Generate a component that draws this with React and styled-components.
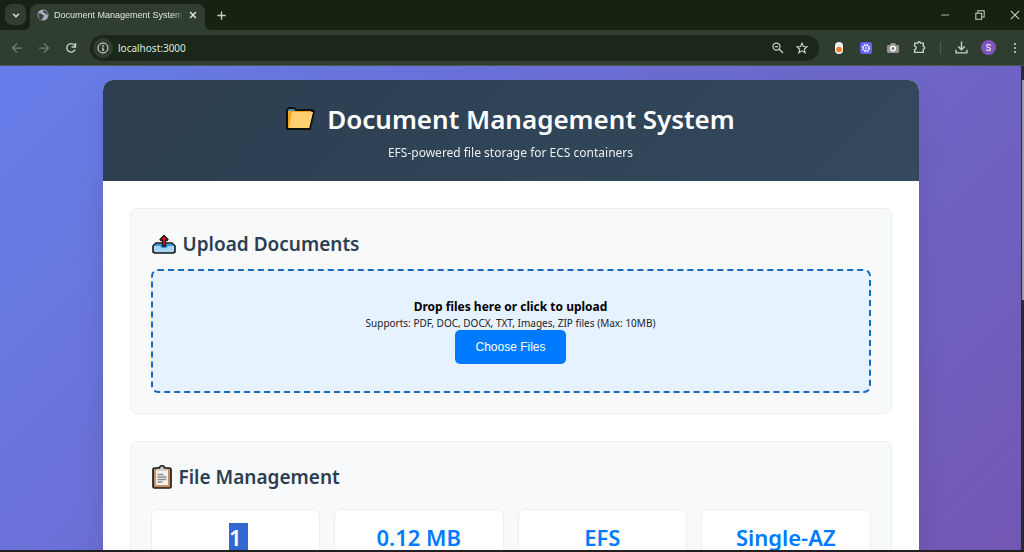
import React from 'react'
import styled, { createGlobalStyle } from 'styled-components'

const GlobalStyle=createGlobalStyle`
    * {
        box-sizing: border-box;
    }
    body {
        margin: 0;
        font-family: "Segoe UI", "Noto Sans", "Open Sans", sans-serif;
        color: #000;
    }
    h1, h2, p {
        margin: 0;
    }
    button {
        border: none;
        padding: 0;
        background: none;
        color: inherit;
        font: inherit;
        cursor: pointer;
    }
    svg {
        display: block;
    }
`

const BrowserWindow=styled.div`
    display: flex;
    flex-direction: column;
    height: 100vh;
    overflow: hidden;
    background-color: #2f3e2e;
`
const TabStrip=styled.div`
    display: flex;
    flex: none;
    height: 30px;
    padding-left: 5px;
    background-color: #162313;
`
const TabSearch=styled.button`
    display: flex;
    align-items: center;
    justify-content: center;
    width: 21px;
    height: 21px;
    margin-top: 4px;
    border-radius: 7px;
    background-color: #2f3e2e;
    color: #dfe8da;
`
const Tab=styled.div`
    position: relative;
    display: flex;
    align-items: center;
    width: 175px;
    margin: 4px 0 0 4px;
    padding: 0 6px 4px 7px;
    border-radius: 8px 8px 0 0;
    background-color: #2f3e2e;
    color: #dfe8da;
    &::before, &::after {
        content: "";
        position: absolute;
        bottom: 0;
        width: 6px;
        height: 6px;
    }
    &::before {
        right: 100%;
        background: radial-gradient(circle at 0 0, transparent 6px, #2f3e2e 6px);
    }
    &::after {
        left: 100%;
        background: radial-gradient(circle at 100% 0, transparent 6px, #2f3e2e 6px);
    }
`
const TabTitle=styled.span`
    flex: 1;
    min-width: 0;
    margin: 0 3px 0 5px;
    white-space: nowrap;
    font-family: "Liberation Sans", Arial, sans-serif;
    font-size: 9px;
    mask-image: linear-gradient(to right, #000 92%, transparent);
`
const IconButton=styled.button`
    display: flex;
    flex: none;
    align-items: center;
    justify-content: center;
    width: ${props => props.$width || 27}px;
    height: ${props => props.$height || 26}px;
    color: ${props => props.$color || '#c5d2bf'};
`
const WindowControls=styled.div`
    display: flex;
    align-items: center;
    gap: 16px;
    margin-left: auto;
`
const Toolbar=styled.div`
    display: flex;
    flex: none;
    align-items: center;
    height: 36px;
    padding-left: 3px;
    border-bottom: 1px solid #4b584a;
`
const AddressBar=styled.label`
    display: flex;
    flex: 1;
    align-items: center;
    height: 26px;
    margin: 0 10px 0 6px;
    padding: 0 5px 0 3px;
    border-radius: 13px;
    background-color: #1b2819;
`
const SiteInfo=styled.span`
    display: flex;
    align-items: center;
    justify-content: center;
    width: 20px;
    height: 20px;
    border-radius: 50%;
    background-color: #2f3e2e;
    color: #dfe8da;
`
const AddressInput=styled.input`
    flex: 1;
    min-width: 0;
    padding: 0 0 0 5px;
    border: none;
    outline: none;
    background: none;
    color: #dfe8da;
    font-family: "Noto Sans", sans-serif;
    font-size: 10px;
`
const ToolbarActions=styled.div`
    display: flex;
    align-items: center;
    gap: 8px;
`
const Divider=styled.span`
    width: 1px;
    height: 12px;
    margin: 0 3px;
    background-color: #4f634b;
`
const Avatar=styled.span`
    display: flex;
    align-items: center;
    justify-content: center;
    width: 15px;
    height: 15px;
    border-radius: 50%;
    background-color: #8055bd;
    color: #fff;
    font-family: Roboto, sans-serif;
    font-size: 9px;
`
const Viewport=styled.div`
    display: flex;
    flex: 1;
    min-height: 0;
    border-bottom: 2px solid #211f22;
`
const Page=styled.div`
    flex: 1;
    overflow: hidden;
    padding: 14px;
    background: linear-gradient(135deg, #667eea 0%, #764ba2 130%);
`
const ScrollTrack=styled.div`
    width: 3px;
    padding: 14px 0 0 1px;
    background-color: #2b2b2b;
`
const ScrollThumb=styled.div`
    height: 220px;
    background-color: #9f9f9f;
`
const Container=styled.main`
    max-width: 816px;
    margin: 0 auto;
    overflow: hidden;
    border-radius: 10px;
    background-color: #fff;
    box-shadow: 0 14px 28px rgba(0,0,0,0.1);
`
const Header=styled.header`
    padding: 19px 20px;
    background: linear-gradient(135deg, #2c3e50 0%, #34495e 100%);
    color: #fff;
    text-align: center;
`
const Title=styled.h1`
    display: flex;
    align-items: center;
    justify-content: center;
    gap: 12px;
    font-size: 26px;
    line-height: 40px;
    font-weight: 600;
`
const Subtitle=styled.p`
    margin-top: 5px;
    font-size: 12px;
    line-height: 18px;
    opacity: 0.9;
`
const Content=styled.div`
    display: flex;
    flex-direction: column;
    gap: 27px;
    padding: 27px;
`
const Section=styled.section`
    padding: 20px;
    border: 1px solid #eceff2;
    border-radius: 7px;
    background-color: #f8f9fa;
`
const SectionTitle=styled.h2`
    display: flex;
    align-items: center;
    gap: 7px;
    margin-bottom: ${props => props.$space}px;
    padding-left: 1px;
    color: #2c3e50;
    font-size: 19px;
    line-height: 30px;
    font-weight: 600;
`
const DropZone=styled.div`
    padding: 27px;
    border: 2px dashed #1a68bf;
    border-radius: 7px;
    background-color: #e6f2ff;
    text-align: center;
`
const DropTitle=styled.p`
    font-size: 12px;
    line-height: 18px;
    font-weight: 700;
`
const DropHint=styled.p`
    color: #222;
    font-size: 10px;
    line-height: 14px;
`
const ChooseButton=styled.button`
    padding: 10px 20px;
    border-radius: 5px;
    background-color: #007bff;
    color: #fff;
    font-family: "Liberation Sans", Arial, sans-serif;
    font-size: 12px;
    line-height: 14px;
`
const Stats=styled.div`
    display: grid;
    grid-template-columns: repeat(4, 1fr);
    gap: 14px;
`
const StatCard=styled.div`
    padding: 13px;
    border: 1px solid #eceff2;
    border-radius: 7px;
    background-color: #fff;
    text-align: center;
`
const StatValue=styled.div`
    color: #007bff;
    font-size: 22px;
    line-height: 28px;
    font-weight: 600;
`
const Selected=styled.span`
    display: inline-block;
    margin-right: -6px;
    padding-right: 6px;
    background-color: #3367d1;
    color: #fff;
`

const Icon=({ size=12, box=24, width=2, children }) => (
  <svg width={size} height={size} viewBox={`0 0 ${box} ${box}`} fill="none" stroke="currentColor" strokeWidth={width} aria-hidden="true">
    {children}
  </svg>
)

const GlobeIcon=() => (
  <svg width="12" height="12" viewBox="0 0 24 24" aria-hidden="true">
    <circle cx="12" cy="12" r="11" fill="#a9adc0" />
    <path d="M3 9c3-1 5 0 7 2s4 1 4 3-3 2-3 4 0 3-2 4C5 21 2 16 3 9zM13 3c-2 1-1 3 0 4s3 0 4 2 3 2 5 2c-1-5-4-8-9-8z" fill="#39453b" />
  </svg>
)

const FolderIcon=() => (
  <svg width="29" height="24" viewBox="0 0 29 24" aria-hidden="true">
    <path d="M1 3l2-2h5l2 2h16v1h2l-4 18H1z" fill="#f5a623" stroke="#101010" strokeWidth="2" strokeLinejoin="round" />
    <path d="M3 2h5l1 2H2z" fill="#3c8ecb" />
    <path d="M6 5h21l-4 16H3z" fill="#ffd070" />
  </svg>
)

const OutboxIcon=() => (
  <svg width="24" height="20" viewBox="0 0 24 20" aria-hidden="true">
    <path d="M1 12l3-3h16l3 3v6l-2 1H3l-2-1z" fill="#a9d5f5" stroke="#151515" strokeWidth="1.6" strokeLinejoin="round" />
    <path d="M4 10h16l2 2h-6c-1 3-7 3-8 0H2z" fill="#3b96e8" />
    <path d="M12 1.500l4 4-1 1-1.500-.5v6h-3V6L9 6.500l-1-1z" fill="#e81224" stroke="#151515" strokeWidth="1.300" strokeLinejoin="round" />
  </svg>
)

const ClipboardIcon=() => (
  <svg width="20" height="24" viewBox="0 0 20 24" aria-hidden="true">
    <rect x="1" y="3" width="18" height="20" rx="1.500" fill="#c49066" stroke="#1d1d1d" strokeWidth="1.700" />
    <path d="M4 5h12v15H4z" fill="#f1f1f1" />
    <path d="M5.500 3h2c0-3 5-3 5 0h2v3h-9z" fill="#cfcfcf" />
    <path d="M5.500 3h2c0-3 5-3 5 0h2" fill="none" stroke="#1d1d1d" strokeWidth="1.400" />
    <path d="M5.500 9.500h6M5.500 12h9M5.500 14.500h9M5.500 17h5" stroke="#8d8d8d" strokeWidth="1.300" />
  </svg>
)

const stats=[
  { value: '1', selected: true },
  { value: '0.12 MB' },
  { value: 'EFS' },
  { value: 'Single-AZ' },
]

const BrowserTabs=() => (
  <TabStrip>
    <TabSearch aria-label="Search tabs">
      <Icon size={10} width={3.5}><path d="M5 9l7 7 7-7" /></Icon>
    </TabSearch>
    <Tab>
      <GlobeIcon />
      <TabTitle>Document Management System</TabTitle>
      <IconButton $width={12} $height={12} $color="#dfe8da" aria-label="Close tab">
        <Icon size={10} width={3.5}><path d="M5 5l14 14M19 5L5 19" /></Icon>
      </IconButton>
    </Tab>
    <IconButton $width={32} $height={30} aria-label="New tab">
      <Icon size={11} width={3}><path d="M12 3v18M3 12h18" /></Icon>
    </IconButton>
    <WindowControls>
      <IconButton $width={19} $height={30} aria-label="Minimize">
        <Icon size={10}><path d="M3 12h19" /></Icon>
      </IconButton>
      <IconButton $width={19} $height={30} aria-label="Restore">
        <Icon size={10} width={2.5}><path d="M2 8h14v14H2zM7 7V2h15v15h-5" /></Icon>
      </IconButton>
      <IconButton $width={19} $height={30} aria-label="Close">
        <Icon size={10} width={2.5}><path d="M2 2l20 20M22 2L2 22" /></Icon>
      </IconButton>
    </WindowControls>
  </TabStrip>
)

const BrowserToolbar=() => (
  <Toolbar>
    <IconButton $color="#70806c" aria-label="Back">
      <Icon width={2.5}><path d="M22 12H4M12 3l-9 9 9 9" /></Icon>
    </IconButton>
    <IconButton $color="#70806c" aria-label="Forward">
      <Icon width={2.5}><path d="M2 12h18M12 3l9 9-9 9" /></Icon>
    </IconButton>
    <IconButton aria-label="Reload">
      <Icon width={2.8}><path d="M20 15a8.500 8.500 0 1 1-1.500-9L21 9M21 2v8h-8" /></Icon>
    </IconButton>
    <AddressBar>
      <SiteInfo>
        <Icon size={12}><circle cx="12" cy="12" r="10" /><path d="M12 11v7M12 6v3" strokeWidth="2.500" /></Icon>
      </SiteInfo>
      <AddressInput type="text" defaultValue="localhost:3000" aria-label="Address" />
      <IconButton $width={24} aria-label="Zoom">
        <Icon width={2.5}><circle cx="9" cy="9" r="7" /><path d="M14 14l8 8M6 9h6" /></Icon>
      </IconButton>
      <IconButton $width={24} aria-label="Bookmark">
        <Icon width={2.3}><path d="M12 2.500l2.900 6.500 7.100.7-5.300 4.700 1.600 7L12 17.600 5.700 21.400l1.600-7L2 9.700l7.100-.7z" /></Icon>
      </IconButton>
    </AddressBar>
    <ToolbarActions>
      <IconButton $width={19} aria-label="Capsule extension">
        <svg width="8" height="12" viewBox="0 0 8 12">
          <rect width="8" height="12" rx="4" fill="#f0f0f0" />
          <circle cx="4" cy="7.500" r="2.800" fill="#f47a2c" />
        </svg>
      </IconButton>
      <IconButton $width={19} aria-label="Gear extension">
        <svg width="12" height="12" viewBox="0 0 12 12">
          <rect width="12" height="12" rx="2.500" fill="#655cf5" />
          <circle cx="6" cy="6" r="3.700" fill="none" stroke="#e4e4ff" strokeWidth="1.300" strokeDasharray="1.800 1.100" />
          <circle cx="6" cy="6" r="2.700" fill="none" stroke="#e4e4ff" />
          <circle cx="6" cy="6" r="1" fill="#e4e4ff" />
        </svg>
      </IconButton>
      <IconButton $width={19} aria-label="Camera extension">
        <svg width="12" height="11" viewBox="0 0 12 11">
          <path d="M1 3h2l1-2h4l1 2h2l1 1v6l-1 1H1l-1-1V4z" fill="#969696" />
          <circle cx="6" cy="6.500" r="2.300" fill="#777" stroke="#fff" strokeWidth="1.500" />
        </svg>
      </IconButton>
      <IconButton $width={19} aria-label="Extensions">
        <Icon size={13} width={2.6}><path d="M3 4h6a2.500 2.500 0 0 1 5 0h5v6a2.500 2.500 0 0 1 0 5v6H3v-5c4-1 4-6 0-7z" /></Icon>
      </IconButton>
      <Divider />
      <IconButton $width={19} aria-label="Downloads">
        <Icon size={13} width={2.6}><path d="M12 1v14M6 10l6 6 6-6M2 16v6h20v-6" /></Icon>
      </IconButton>
      <IconButton $width={19} aria-label="Profile"><Avatar>S</Avatar></IconButton>
      <IconButton $width={18} aria-label="Menu">
        <svg width="4" height="12" viewBox="0 0 4 12" fill="currentColor">
          <circle cx="2" cy="2" r="1.100" />
          <circle cx="2" cy="6" r="1.100" />
          <circle cx="2" cy="10" r="1.100" />
        </svg>
      </IconButton>
    </ToolbarActions>
  </Toolbar>
)

const App=() => {
  return (
    <BrowserWindow>
      <GlobalStyle />
      <BrowserTabs />
      <BrowserToolbar />
      <Viewport>
        <Page>
          <Container>
            <Header>
              <Title><FolderIcon />Document Management System</Title>
              <Subtitle>EFS-powered file storage for ECS containers</Subtitle>
            </Header>
            <Content>
              <Section>
                <SectionTitle $space={10}><OutboxIcon />Upload Documents</SectionTitle>
                <DropZone>
                  <DropTitle>Drop files here or click to upload</DropTitle>
                  <DropHint>Supports: PDF, DOC, DOCX, TXT, Images, ZIP files (Max: 10MB)</DropHint>
                  <ChooseButton>Choose Files</ChooseButton>
                </DropZone>
              </Section>
              <Section>
                <SectionTitle $space={17}><ClipboardIcon />File Management</SectionTitle>
                <Stats>
                  {stats.map(stat => (
                    <StatCard key={stat.value}>
                      <StatValue>{stat.selected ? <Selected>{stat.value}</Selected> : stat.value}</StatValue>
                    </StatCard>
                  ))}
                </Stats>
              </Section>
            </Content>
          </Container>
        </Page>
        <ScrollTrack><ScrollThumb /></ScrollTrack>
      </Viewport>
    </BrowserWindow>
  )
}

export default App
